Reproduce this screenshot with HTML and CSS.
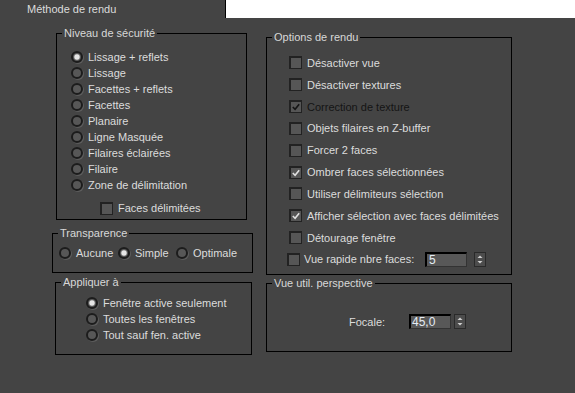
FILE: index.html
```html
<!DOCTYPE html>
<html lang="fr">
<head>
    <meta charset="UTF-8">
    <title>Méthode de rendu</title>
    <link rel="stylesheet" href="styles.css">
</head>
<body>

    <div class="tabbar">
        <div class="tab">Méthode de rendu</div>
        <div class="tab-rest"></div>
    </div>

    <div class="panel">
        <div class="col-left">
            <fieldset class="group niveau">
                <legend>Niveau de sécurité</legend>
                <div class="body">
                    <div class="opt"><span class="radio on"></span>Lissage + reflets</div>
                    <div class="opt"><span class="radio"></span>Lissage</div>
                    <div class="opt"><span class="radio"></span>Facettes + reflets</div>
                    <div class="opt"><span class="radio"></span>Facettes</div>
                    <div class="opt"><span class="radio"></span>Planaire</div>
                    <div class="opt"><span class="radio"></span>Ligne Masquée</div>
                    <div class="opt"><span class="radio"></span>Filaires éclairées</div>
                    <div class="opt"><span class="radio"></span>Filaire</div>
                    <div class="opt"><span class="radio"></span>Zone de délimitation</div>
                    <div class="opt faces"><span class="check"></span>Faces délimitées</div>
                </div>
            </fieldset>

            <fieldset class="group transp">
                <legend>Transparence</legend>
                <div class="body">
                    <div class="opt"><span class="radio"></span>Aucune</div>
                    <div class="opt"><span class="radio on"></span>Simple</div>
                    <div class="opt"><span class="radio"></span>Optimale</div>
                </div>
            </fieldset>

            <fieldset class="group appliquer">
                <legend>Appliquer à</legend>
                <div class="body">
                    <div class="opt"><span class="radio on"></span>Fenêtre active seulement</div>
                    <div class="opt"><span class="radio"></span>Toutes les fenêtres</div>
                    <div class="opt"><span class="radio"></span>Tout sauf fen. active</div>
                </div>
            </fieldset>
        </div>

        <div class="col-right">
            <fieldset class="group options">
                <legend>Options de rendu</legend>
                <div class="body">
                    <div class="opt"><span class="check"></span>Désactiver vue</div>
                    <div class="opt"><span class="check"></span>Désactiver textures</div>
                    <div class="opt dark"><span class="check on"><svg viewBox="0 0 11 11"><polyline points="2,5.5 4.5,8 9,2.5"/></svg></span>Correction de texture</div>
                    <div class="opt"><span class="check"></span>Objets filaires en Z-buffer</div>
                    <div class="opt"><span class="check"></span>Forcer 2 faces</div>
                    <div class="opt"><span class="check on"><svg viewBox="0 0 11 11"><polyline points="2,5.5 4.5,8 9,2.5"/></svg></span>Ombrer faces sélectionnées</div>
                    <div class="opt"><span class="check"></span>Utiliser délimiteurs sélection</div>
                    <div class="opt"><span class="check on"><svg viewBox="0 0 11 11"><polyline points="2,5.5 4.5,8 9,2.5"/></svg></span>Afficher sélection avec faces délimitées</div>
                    <div class="opt"><span class="check"></span>Détourage fenêtre</div>
                    <div class="opt quick">
                        <span class="check"></span>
                        <span class="quick-label">Vue rapide nbre faces:</span>
                        <span class="field">5</span>
                        <span class="spin"><svg viewBox="0 0 10 13"><polygon points="5,2.5 2.5,5 7.5,5"/><polygon points="2.5,8 7.5,8 5,10.5"/></svg></span>
                    </div>
                </div>
            </fieldset>

            <fieldset class="group vue">
                <legend>Vue util. perspective</legend>
                <div class="body">
                    <div class="focale">
                        <span class="focale-label">Focale:</span>
                        <span class="field narrow">45,0</span>
                        <span class="spin"><svg viewBox="0 0 10 13"><polygon points="5,2.5 2.5,5 7.5,5"/><polygon points="2.5,8 7.5,8 5,10.5"/></svg></span>
                    </div>
                </div>
            </fieldset>
        </div>
    </div>

</body>
</html>
```

FILE: styles.css
```css
body {
    margin: 0;
    width: 575px;
    height: 393px;
    overflow: hidden;
    background-color: #444444;
    color: #dcdcdc;
    font-family: "Liberation Sans", Arial, sans-serif;
    font-size: 11px;
}

/* tab strip */
.tabbar {
    display: flex;
    height: 18px;
}

.tab {
    width: 226px;
    box-sizing: border-box;
    padding-left: 27px;
    line-height: 18px;
    border-right: 1px solid #000;
}

.tab-rest {
    flex: 1;
    background: #fff;
}

/* two columns */
.panel {
    display: flex;
    padding-top: 9px;
}

.col-left {
    width: 200px;
    margin-left: 52px;
    display: flex;
    flex-direction: column;
}

.col-right {
    width: 246px;
    margin-left: 14px;
    padding-top: 4px;
    display: flex;
    flex-direction: column;
}

/* group boxes */
.group {
    margin: 0;
    padding: 0;
    min-width: 0;
    box-sizing: border-box;
    border: 1px solid #000;
}

.group legend {
    margin-left: 5px;
    padding: 0 2px;
    line-height: 13px;
    color: #d8d8d8;
}

.niveau {
    width: 191px;
    height: 193px;
    margin-left: 4px;
}

.niveau .body {
    padding: 9px 0 0 14px;
}

.transp {
    width: 201px;
    height: 46px;
    margin-top: 7px;
}

.transp .body {
    display: grid;
    grid-template-columns: 59px 58px auto;
    padding: 5px 0 0 6px;
}

.appliquer {
    width: 197px;
    height: 79px;
    margin-top: 3px;
    margin-left: 3px;
}

.appliquer .body {
    padding: 6px 0 0 30px;
}

.options {
    height: 244px;
}

.options .body {
    display: grid;
    grid-auto-rows: 21.85px;
    padding: 8px 0 0 22px;
}

.vue {
    height: 75px;
    margin-top: 2px;
}

.vue .body {
    padding: 24px 0 0 82px;
}

/* rows */
.opt {
    display: flex;
    align-items: center;
    gap: 5px;
    height: 16px;
    white-space: nowrap;
}

.options .opt {
    height: auto;
}

.opt.faces {
    margin: 7px 0 0 29px;
}

.opt.dark {
    color: #141414;
}

.opt.quick {
    margin-left: -2px;
    margin-top: -1px;
    gap: 4px;
}

.quick-label {
    width: 117px;
}

.focale {
    display: flex;
    align-items: center;
    height: 15px;
}

.focale-label {
    width: 60px;
}

/* radio buttons */
.radio {
    flex: none;
    width: 12px;
    height: 12px;
    box-sizing: border-box;
    border-radius: 50%;
    border: 2px solid #1c1c1c;
    background: #575757;
    box-shadow: 1px 1px 0 #5c5c5c;
}

.radio.on {
    background: radial-gradient(circle, #e6e6e6 0 2.2px, #9a9a9a 2.8px, #575757 3.6px);
}

/* check boxes */
.check {
    flex: none;
    display: flex;
    align-items: center;
    justify-content: center;
    width: 13px;
    height: 13px;
    box-sizing: border-box;
    border: 1px solid #222;
    border-top-width: 2px;
    border-left-width: 2px;
    background: #565656;
}

.check svg {
    width: 10px;
    height: 10px;
}

.check polyline {
    fill: none;
    stroke: #e0e0e0;
    stroke-width: 1.8;
}

.dark .check polyline {
    stroke: #141414;
}

/* numeric fields */
.field {
    width: 42px;
    height: 15px;
    box-sizing: border-box;
    padding-left: 2px;
    line-height: 13px;
    font-size: 12px;
    color: #e4ecf4;
    background: #585858;
    border-top: 2px solid #000;
    border-left: 2px solid #000;
    border-right: 1px solid #333;
    border-bottom: 1px solid #333;
}

.field.narrow {
    padding-left: 1px;
}

.spin {
    width: 12px;
    height: 15px;
    box-sizing: border-box;
    margin-left: 3px;
    border: 1px solid #2a2a2a;
    background: #4c4c4c;
    display: flex;
}

.spin svg {
    width: 10px;
    height: 13px;
}

.spin polygon {
    fill: #d0d0d0;
}
```
